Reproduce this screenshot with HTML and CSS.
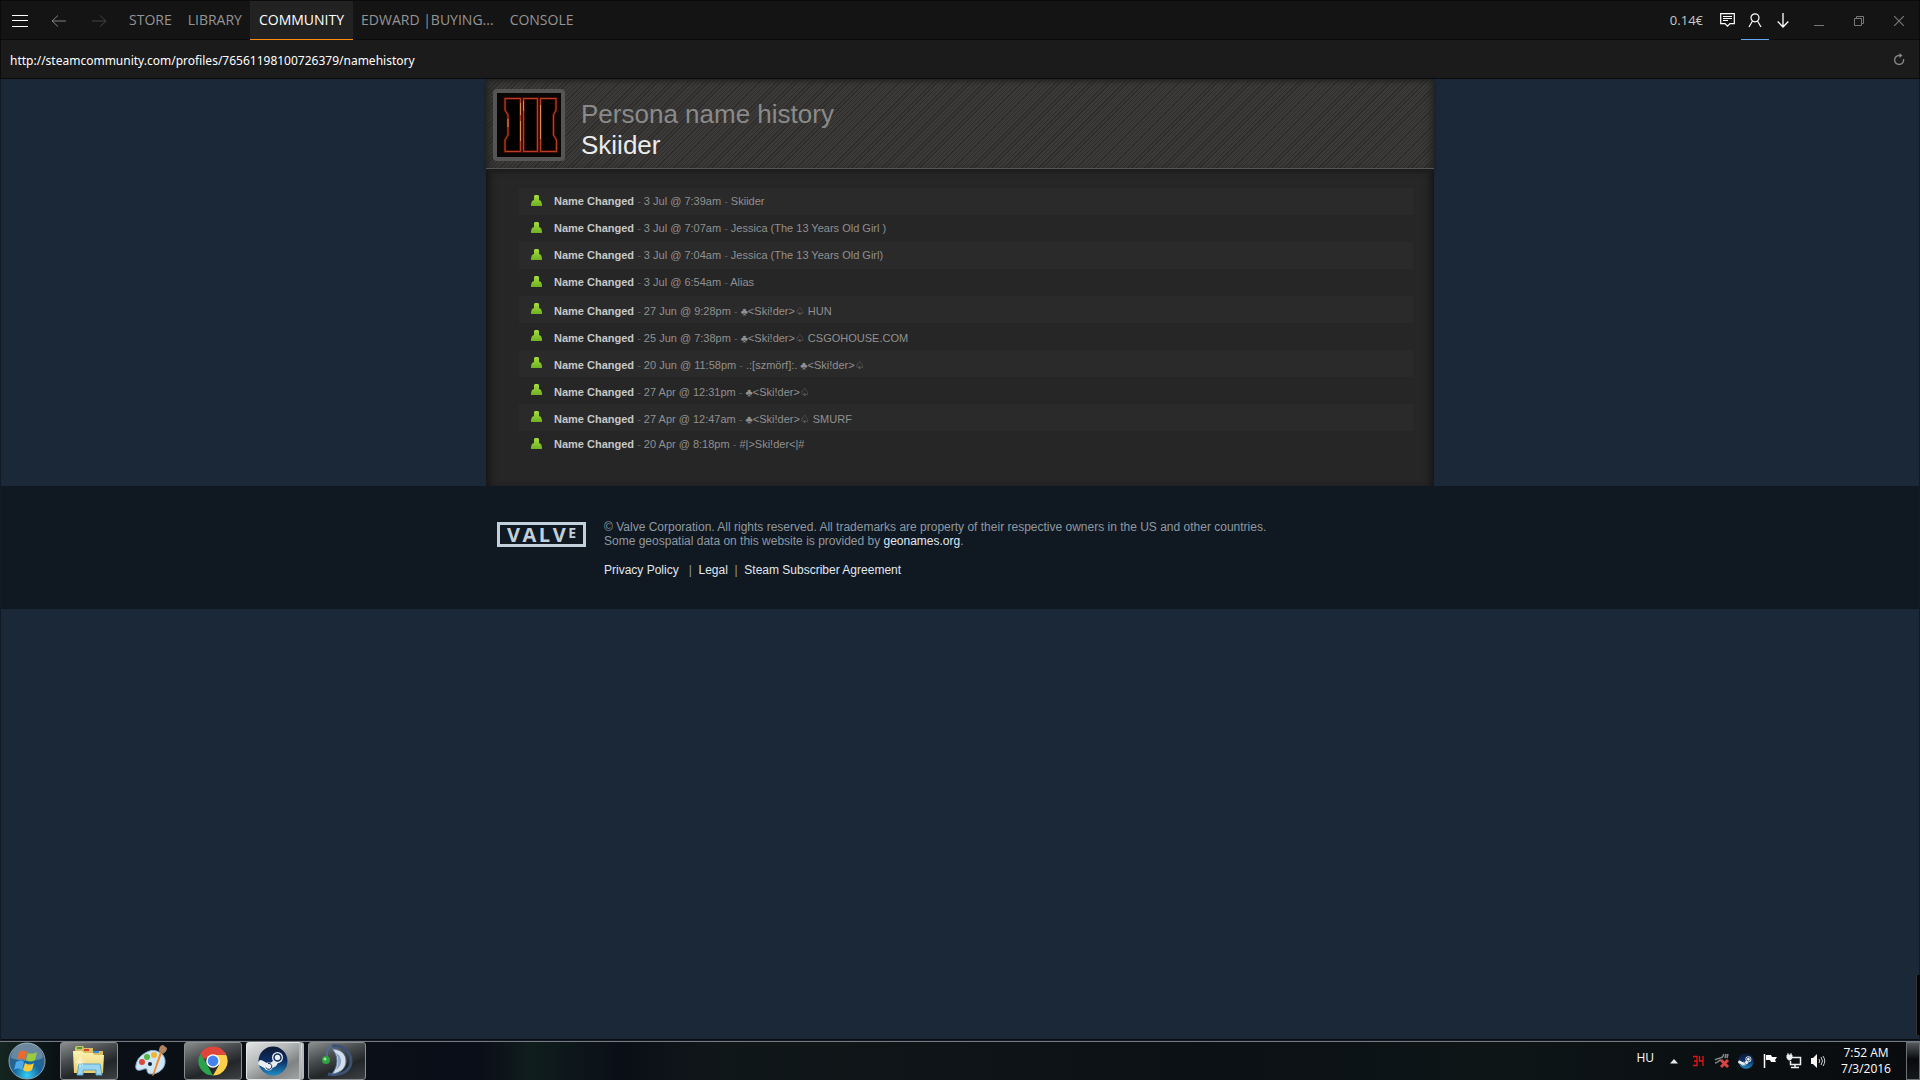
FILE: index.html
```
<!DOCTYPE html>
<html lang="en">
<head>
    <meta charset="UTF-8">
    <meta name="viewport" content="width=device-width, initial-scale=1.0">
    <title>Persona name history</title>
    <link rel="stylesheet" href="styles.css">
</head>
<body>
    <!-- shared shapes -->
    <svg class="defs" width="0" height="0">
        <defs>
            <linearGradient id="green" x1="0" y1="0" x2="0" y2="1">
                <stop offset="0" stop-color="#a6dc3e"/>
                <stop offset="1" stop-color="#6fb122"/>
            </linearGradient>
            <linearGradient id="steam-bg" x1="0" y1="0" x2="0" y2="1">
                <stop offset="0" stop-color="#0b1a35"/>
                <stop offset="0.5" stop-color="#0d2f63"/>
                <stop offset="1" stop-color="#1d8cc4"/>
            </linearGradient>
            <radialGradient id="orb" cx="0.5" cy="0.9" r="0.8">
                <stop offset="0" stop-color="#35d0f5"/>
                <stop offset="0.45" stop-color="#16679f"/>
                <stop offset="1" stop-color="#3d5f7b"/>
            </radialGradient>
            <linearGradient id="folder" x1="0" y1="0" x2="0" y2="1">
                <stop offset="0" stop-color="#fdf3b4"/>
                <stop offset="1" stop-color="#e9cd6c"/>
            </linearGradient>
            <symbol id="person" viewBox="0 0 11 11">
                <path fill="url(#green)" d="M4 0h3l1 1v4l2 1 1 3v2H0V9l1-3 2-1V1z"/>
            </symbol>
            <symbol id="steam" viewBox="0 0 30 30">
                <circle cx="15" cy="15" r="14.500" fill="url(#steam-bg)"/>
                <path fill="none" stroke="#e9edf2" stroke-width="5.500" stroke-linecap="round" d="M3 17l7 4 6-3 4-6"/>
                <circle cx="19.500" cy="11.500" r="5.500" fill="#e9edf2"/>
                <circle cx="19.500" cy="11.500" r="3.500" fill="none" stroke="#12305c" stroke-width="1.500"/>
                <circle cx="10.500" cy="20.500" r="4" fill="#e9edf2"/>
                <path d="M8 21.500a3 3 0 1 0 2-4" fill="none" stroke="#12305c"/>
            </symbol>
        </defs>
    </svg>

    <header class="topbar">
        <button class="icon-button menu" aria-label="Menu">
            <svg width="16" height="12" viewBox="0 0 16 12"><path d="M0 .5h16M0 5.500h16M0 11.500h16" stroke="#fff"/></svg>
        </button>
        <button class="icon-button back" aria-label="Back">
            <svg width="16" height="12" viewBox="0 0 16 12"><path d="M15 6H1M7 .5L1 6l6 5.500" stroke="#808080" fill="none"/></svg>
        </button>
        <button class="icon-button forward" aria-label="Forward">
            <svg width="16" height="12" viewBox="0 0 16 12"><path d="M1 6h14M9 .5L15 6l-6 5.500" stroke="#444" fill="none"/></svg>
        </button>
        <nav class="tabs">
            <a href="#">STORE</a>
            <a href="#">LIBRARY</a>
            <a href="#" class="active">COMMUNITY</a>
            <a href="#">EDWARD |BUYING...</a>
            <a href="#">CONSOLE</a>
        </nav>
        <span class="wallet">0.14€</span>
        <button class="icon-button chat" aria-label="News">
            <svg width="15" height="15" viewBox="0 0 15 15"><path d="M.7.7h13.600v10H10l-2.500 2.500L5 10.700H.7zM3 3.500h9M3 5.500h9M3 7.500h5" fill="none" stroke="#fff" stroke-width="1.200"/></svg>
        </button>
        <button class="icon-button friends" aria-label="Friends">
            <svg width="14" height="15" viewBox="0 0 14 15"><circle cx="7" cy="4.800" r="4" fill="none" stroke="#fff" stroke-width="1.200"/><path d="M4.500 8L1 14M9.500 8l3.500 6" stroke="#fff" stroke-width="1.200"/></svg>
        </button>
        <button class="icon-button downloads" aria-label="Downloads">
            <svg width="12" height="15" viewBox="0 0 12 15"><path d="M6 0v14M.7 8.500L6 14l5.300-5.500" fill="none" stroke="#fff" stroke-width="1.300"/></svg>
        </button>
        <button class="icon-button window" aria-label="Minimize">
            <svg width="10" height="10" viewBox="0 0 10 10"><path d="M0 9.500h10" stroke="#777"/></svg>
        </button>
        <button class="icon-button window" aria-label="Restore">
            <svg width="10" height="10" viewBox="0 0 10 10"><path d="M.5 2.500h7v7h-7zM2.500 2.500v-2h7v7h-2" fill="none" stroke="#777"/></svg>
        </button>
        <button class="icon-button window" aria-label="Close">
            <svg width="10" height="10" viewBox="0 0 10 10"><path d="M0 0l10 10M10 0L0 10" stroke="#777" stroke-width="1.200"/></svg>
        </button>
    </header>

    <div class="urlbar">
        <input type="text" aria-label="Address" value="http://steamcommunity.com/profiles/76561198100726379/namehistory">
        <button class="icon-button" aria-label="Reload">
            <svg width="12" height="12" viewBox="0 0 12 12"><path d="M10.500 6A4.500 4.500 0 1 1 6 2.500h1.500" fill="none" stroke="#888" stroke-width="1.300"/><path d="M6.500 0l3 2.500-3 2.500z" fill="#888"/></svg>
        </button>
    </div>

    <main class="page">
        <section class="profile">
            <div class="profile-header">
                <svg class="avatar" viewBox="0 0 64 64" role="img" aria-label="Skiider">
                    <rect width="64" height="64" fill="#090606"/>
                    <g fill="#030000" stroke="#5c1208" stroke-width="2.500">
                        <path d="M8 5.500h15.500v53H8V47l3-5V22l-3-5z"/>
                        <path d="M26.500 5.500h14v53h-14z"/>
                        <path d="M43.500 5.500h15.500V17l-2.500 5v20l3 5v11.500h-16z"/>
                    </g>
                    <g fill="none" stroke="#b8401f">
                        <path d="M8 5.500h15.500v53H8V47l3-5V22l-3-5z"/>
                        <path d="M26.500 5.500h14v53h-14z"/>
                        <path d="M43.500 5.500h15.500V17l-2.500 5v20l3 5v11.500h-16z"/>
                    </g>
                    <path d="M23.500 10v12m0 6v20M43.500 12v34M26.500 8v10M11 26v8" stroke="#e08a50"/>
                </svg>
                <h1>Persona name history<br><a href="#">Skiider</a></h1>
            </div>
            <ul class="history">
                <li><svg><use href="#person"/></svg><p><b>Name Changed</b> <i>-</i> 3 Jul @ 7:39am <i>-</i> Skiider</p></li>
                <li><svg><use href="#person"/></svg><p><b>Name Changed</b> <i>-</i> 3 Jul @ 7:07am <i>-</i> Jessica (The 13 Years Old Girl )</p></li>
                <li><svg><use href="#person"/></svg><p><b>Name Changed</b> <i>-</i> 3 Jul @ 7:04am <i>-</i> Jessica (The 13 Years Old Girl)</p></li>
                <li><svg><use href="#person"/></svg><p><b>Name Changed</b> <i>-</i> 3 Jul @ 6:54am <i>-</i> Alias</p></li>
                <li class="symbols"><svg><use href="#person"/></svg><p><b>Name Changed</b> <i>-</i> 27 Jun @ 9:28pm <i>-</i> ♣&lt;Ski!der&gt;♤ HUN</p></li>
                <li class="symbols"><svg><use href="#person"/></svg><p><b>Name Changed</b> <i>-</i> 25 Jun @ 7:38pm <i>-</i> ♣&lt;Ski!der&gt;♤ CSGOHOUSE.COM</p></li>
                <li class="symbols"><svg><use href="#person"/></svg><p><b>Name Changed</b> <i>-</i> 20 Jun @ 11:58pm <i>-</i> .:[szmörf]:. ♣&lt;Ski!der&gt;♤</p></li>
                <li class="symbols"><svg><use href="#person"/></svg><p><b>Name Changed</b> <i>-</i> 27 Apr @ 12:31pm <i>-</i> ♣&lt;Ski!der&gt;♤</p></li>
                <li class="symbols"><svg><use href="#person"/></svg><p><b>Name Changed</b> <i>-</i> 27 Apr @ 12:47am <i>-</i> ♣&lt;Ski!der&gt;♤ SMURF</p></li>
                <li><svg><use href="#person"/></svg><p><b>Name Changed</b> <i>-</i> 20 Apr @ 8:18pm <i>-</i> #|&gt;Ski!der&lt;|#</p></li>
            </ul>
        </section>

        <footer class="footer">
            <div class="footer-inner">
                <div class="valve"><span>V</span><span>A</span><span>L</span><span>V</span><span class="raised">E</span></div>
                <div class="legal">
                    <p>© Valve Corporation. All rights reserved. All trademarks are property of their respective owners in the US and other countries.<br>Some geospatial data on this website is provided by <a href="#">geonames.org</a>.</p>
                    <p class="links"><a href="#">Privacy Policy</a> &nbsp; | &nbsp;<a href="#">Legal</a> &nbsp;| &nbsp;<a href="#">Steam Subscriber Agreement</a></p>
                </div>
            </div>
        </footer>
        <div class="edge-handle"></div>
    </main>

    <div class="taskbar">
        <button class="start" aria-label="Start">
            <svg width="38" height="38" viewBox="0 0 38 38">
                <circle cx="19" cy="19" r="18" fill="url(#orb)" stroke="#8fa6b5"/>
                <path d="M3 16a16 15 0 0 1 32 0c-8 4-22 4-32 0z" fill="#fff" opacity="0.250"/>
                <path d="M11 10c3-2 5-2 8 0l-2 8c-3-2-5-2-8 0z" fill="#ee6a2c"/>
                <path d="M20 11c3 1 6 1 9-1l-2 8c-3 2-6 2-9 0z" fill="#9ccc3c"/>
                <path d="M8 20c3-2 6-2 8 0l-2 8c-3-2-5-2-8 0z" fill="#4fa8e8"/>
                <path d="M17 21c3 2 6 2 9 0l-2 7c-3 2-6 2-9 0z" fill="#fbcc3a"/>
            </svg>
        </button>
        <button class="task" aria-label="Explorer">
            <svg width="34" height="32" viewBox="0 0 34 32">
                <path d="M3 3l1-2h7l1 2h9v3h10v20H3z" fill="#d9bd62"/>
                <path d="M5 2h5v2H5z" fill="#27a844"/><path d="M12 4h5v2h-5z" fill="#d8452f"/><path d="M21 6h6v2h-6z" fill="#3c8edc"/>
                <path d="M1 6h9l2 2h9l1 2h10l-1 18H2z" fill="url(#folder)"/>
                <path d="M5 30l2-11h21l2 11h-6v-5H11v5z" fill="#9bd6f1" stroke="#5fa9d0"/>
                <path d="M8 12v10M3 17h10M5 14l6 6M11 14l-6 6" stroke="#fff" opacity="0.700"/>
            </svg>
        </button>
        <button class="task plain" aria-label="Paint">
            <svg width="34" height="34" viewBox="0 0 34 34">
                <path d="M13 8C20 4 30 8 31 16c1 8-6 14-14 14-3 0-4-2-4-4s-3-1-6 0c-4 1-6-1-5-5 1-6 5-10 11-13z" fill="#cfe6f5" stroke="#86aecb"/>
                <circle cx="8" cy="18" r="3" fill="#d9483b"/><circle cx="13" cy="13" r="3" fill="#57b544"/><circle cx="20" cy="11" r="3" fill="#f2b632"/>
                <circle cx="16" cy="20" r="2" fill="#12212e"/>
                <path d="M28 9l-8 22-2 1 1-3L26 8z" fill="#ef8a2c"/><path d="M25 7c0-4 2-6 4-6l4 3c0 3-2 4-4 6z" fill="#b08560"/>
            </svg>
        </button>
        <button class="task" aria-label="Chrome">
            <svg width="30" height="30" viewBox="0 0 30 30">
                <path d="M15 15L2.400 7.700A14.500 14.500 0 0 1 27.600 7.700z" fill="#e0453a"/>
                <path d="M2.400 7.700L9 18.500 15 29.500A14.500 14.500 0 0 1 2.400 7.700z" fill="#2ba24c"/>
                <path d="M27.600 7.700A14.500 14.500 0 0 1 15 29.500L21 19 15 8.500z" fill="#fdcf4a"/>
                <path d="M2.400 7.700h25.200L28 9H15l-9 4z" fill="#e0453a"/>
                <circle cx="15" cy="15" r="6.800" fill="#fff"/><circle cx="15" cy="15" r="5.400" fill="#4483ee"/>
            </svg>
        </button>
        <button class="task stacked" aria-label="Steam"><svg width="30" height="30"><use href="#steam"/></svg></button>
        <button class="task" aria-label="TeamSpeak">
            <svg width="34" height="34" viewBox="0 0 34 34">
                <path d="M12 2c11-2 19 6 19 15S22 33 8 30" fill="none" stroke="#3b5273" stroke-width="3"/>
                <path d="M12 5c9 0 14 5 14 12s-5 12-14 13c3-4 5-8 5-13S15 8 12 5z" fill="#d4deeb" stroke="#5d789d"/>
                <path d="M16 9c4 2 5 5 5 8s-1 6-5 9c3-6 3-11 0-17z" fill="#8ba2c0"/>
                <path d="M7 14C6 8 8 4 12 2" fill="none" stroke="#506d94" stroke-width="2"/>
                <circle cx="6" cy="16" r="4" fill="#2da43e"/><circle cx="5" cy="15" r="1.500" fill="#a5e8a0"/>
            </svg>
        </button>

        <div class="tray">
            <span class="lang">HU</span>
            <svg width="8" height="5" viewBox="0 0 8 5"><path d="M0 4.500L4 0l4 4.500z" fill="#e8e8e8"/></svg>
            <svg class="temp" width="16" height="16" viewBox="0 0 16 16"><path d="M3 3.500h4v9H3M4 8h3M9.500 3v5H13M13 3v10" fill="none" stroke="#f01010" stroke-width="1.300"/></svg>
            <svg width="16" height="16" viewBox="0 0 16 16"><path d="M1 7c2-2 5-1 7-3M1 10c3 0 4-3 6-3M8 5l2-4M11 5l1-4M13 5l1-4" fill="none" stroke="#85898a" stroke-width="1.500"/><path d="M7 7l7 7M14 7l-7 7" stroke="#d84440" stroke-width="3"/></svg>
            <svg width="16" height="16"><use href="#steam"/></svg>
            <svg width="16" height="16" viewBox="0 0 16 16"><path d="M2.500 1v14" stroke="#fff" stroke-width="1.500"/><path d="M4 2h5l1 2h5l-2 3 1 2H9L8 7H4z" fill="#fff"/></svg>
            <svg width="16" height="16" viewBox="0 0 16 16"><path d="M6 4.500h8.500v7H4.500V8M5 14.500h8M9 12v2" fill="none" stroke="#eee" stroke-width="1.500"/><path d="M1 2h5v3L4.500 7h-2L1 5zM2 0v2M5 0v2" fill="#eee" stroke="#eee"/></svg>
            <svg width="16" height="16" viewBox="0 0 16 16"><path d="M1 5h2l4-4v14l-4-4H1z" fill="#f5f5f5"/><path d="M9 6q1.500 2 0 4M11 4q3 4 0 8M13 3q3.500 5 0 10" fill="none" stroke="#d0d0d0"/></svg>
            <div class="clock">7:52 AM<br>7/3/2016</div>
            <button class="show-desktop" aria-label="Show desktop"></button>
        </div>
    </div>
</body>
</html>
```

FILE: styles.css
```
* {
    box-sizing: border-box;
}

body {
    margin: 0;
    min-height: 100vh;
    display: flex;
    flex-direction: column;
    font-family: "Liberation Sans", Arial, "DejaVu Sans", sans-serif;
    background: #1b2838;
}

h1, p, ul {
    margin: 0;
    padding: 0;
}

a {
    color: inherit;
    text-decoration: none;
}

button {
    padding: 0;
    border: none;
    background: none;
    cursor: pointer;
}

svg {
    display: block;
    flex-shrink: 0;
}

.defs {
    position: absolute;
}

/* client window */
.topbar {
    height: 40px;
    display: flex;
    align-items: stretch;
    background: #141414;
    border-top: 1px solid #0b0b0b;
    border-left: 1px solid #0b0b0b;
    border-right: 1px solid #0b0b0b;
    box-shadow: inset 0 -1px #0b0b0b;
    font-family: "Open Sans", "Noto Sans", sans-serif;
    font-size: 14px;
    color: #949494;
}

.icon-button {
    display: flex;
    align-items: center;
    justify-content: center;
    width: 40px;
}

.menu {
    width: 38px;
}

.tabs {
    display: flex;
    flex: 1;
    padding-left: 2px;
}

.tabs a {
    padding: 0 8px;
    line-height: 38px;
    white-space: nowrap;
}

.tabs .active {
    padding: 0 9px;
    color: #fff;
    background: #222;
    border-bottom: 1px solid #ff8a10;
}

.wallet {
    padding-right: 10px;
    font-size: 13px;
    line-height: 38px;
    color: #c8c8c8;
}

.chat,
.friends,
.downloads {
    width: 28px;
}

.downloads {
    margin-right: 2px;
}

.friends {
    border-bottom: 1px solid #62a8f5;
}

.urlbar {
    height: 39px;
    display: flex;
    background: #1b1b1b;
    border: 1px solid #0b0b0b;
    border-top: none;
}

.urlbar input {
    flex: 1;
    padding: 2px 9px 0;
    border: none;
    background: none;
    color: #fff;
    font-family: "Noto Sans", "Open Sans", sans-serif;
    font-size: 12px;
}

.page {
    flex: 1;
    position: relative;
    border: 1px solid #111a25;
    border-top: none;
}

/* name history */
.profile {
    max-width: 948px;
    margin: 0 auto;
    padding-bottom: 28px;
    background: #262626;
    box-shadow: inset 8px 0 8px -6px #111, inset -8px 0 8px -6px #111;
}

.profile-header {
    display: flex;
    gap: 16px;
    height: 90px;
    padding: 10px 7px;
    border-bottom: 1px solid #555;
    background: repeating-linear-gradient(135deg, #2d2c2b 0 1px, #3b3a38 1px 3px);
    box-shadow: inset 0 4px 4px -2px #222, inset 8px 0 8px -6px #222, inset -8px 0 8px -6px #222, 0 3px 4px #1c1c1c;
}

.avatar {
    width: 72px;
    height: 72px;
    border: 4px solid #555;
    border-radius: 4px;
    background: #555;
}

h1 {
    padding-top: 10px;
    font-size: 26px;
    font-weight: normal;
    line-height: 31px;
    color: #8a8a8a;
}

h1 a {
    color: #ebebeb;
}

.history {
    list-style: none;
    padding: 19px 21px 0 33px;
    font-size: 11px;
    color: #909090;
}

.history li {
    display: flex;
    gap: 12px;
    height: 27px;
    padding: 7px 12px;
}

.history li:nth-child(odd) {
    background: #2a2a2a;
}

.history svg {
    width: 11px;
    height: 11px;
}

.history p {
    line-height: 13px;
    white-space: nowrap;
}

.history .symbols p {
    line-height: 17px;
}

.history b {
    color: #c8c8c8;
}

.history i {
    font-style: normal;
    color: #5c5c5c;
}

/* footer */
.footer {
    padding: 34px 0 32px;
    background: #101822;
    font-size: 12px;
    line-height: 14px;
    color: #8f98a0;
}

.footer-inner {
    display: flex;
    gap: 18px;
    max-width: 940px;
    margin: 0 auto;
    padding: 0 7px;
}

.footer a {
    color: #e0e8f0;
}

.links {
    padding-top: 15px;
}

.valve {
    display: flex;
    justify-content: space-between;
    width: 89px;
    height: 25px;
    margin-top: 2px;
    padding: 0 7px;
    border: 3px solid #c2d0dc;
    font-family: "Open Sans", sans-serif;
    font-size: 20px;
    font-weight: bold;
    line-height: 19px;
    color: #c2d0dc;
}

.valve .raised {
    font-size: 14px;
    line-height: 15px;
}

.edge-handle {
    position: absolute;
    right: -1px;
    bottom: 5px;
    width: 4px;
    height: 60px;
    background: #050505;
    border-left: 1px solid #333;
}

/* taskbar */
.taskbar {
    height: 39px;
    display: flex;
    align-items: stretch;
    gap: 4px;
    padding-left: 8px;
    border-top: 1px solid #777b80;
    background: linear-gradient(90deg, #142520 0, #0a1015 60px, #0b0f18 380px, #0a0e18 480px, #0f1d1c 530px, #0a0f17 620px, #101719 720px, #0b1114 1200px, #0d1517 1500px, #090b0e 100%);
    box-shadow: 0 -2px #0a0d10;
    font-family: "Open Sans", "Noto Sans", sans-serif;
}

.start {
    width: 48px;
}

.task {
    display: flex;
    align-items: center;
    justify-content: center;
    width: 58px;
    border: 1px solid #8b8e90;
    border-radius: 3px;
    background: linear-gradient(160deg, #8a8d8d 0%, #4b4f51 35%, #222629 65%, #3d4143 100%);
}

.plain {
    border-color: transparent;
    background: none;
}

.stacked {
    border-color: #e5e7e8;
    border-right: 5px double #b5b8b8;
    background: linear-gradient(150deg, #e2e4e4 0%, #b5b8b8 40%, #7f8384 70%, #a0a3a3 100%);
}

.tray {
    display: flex;
    align-items: center;
    gap: 8px;
    margin-left: auto;
    color: #fff;
    font-size: 12px;
}

.lang {
    padding-right: 8px;
    line-height: 32px;
    align-self: flex-start;
}

.temp {
    margin-left: 4px;
}

.clock {
    width: 64px;
    text-align: center;
    line-height: 16px;
}

.show-desktop {
    align-self: stretch;
    width: 14px;
    border: 1px solid #6d7073;
    background: linear-gradient(#54585c, #08090b 45%, #15181b);
}
```
